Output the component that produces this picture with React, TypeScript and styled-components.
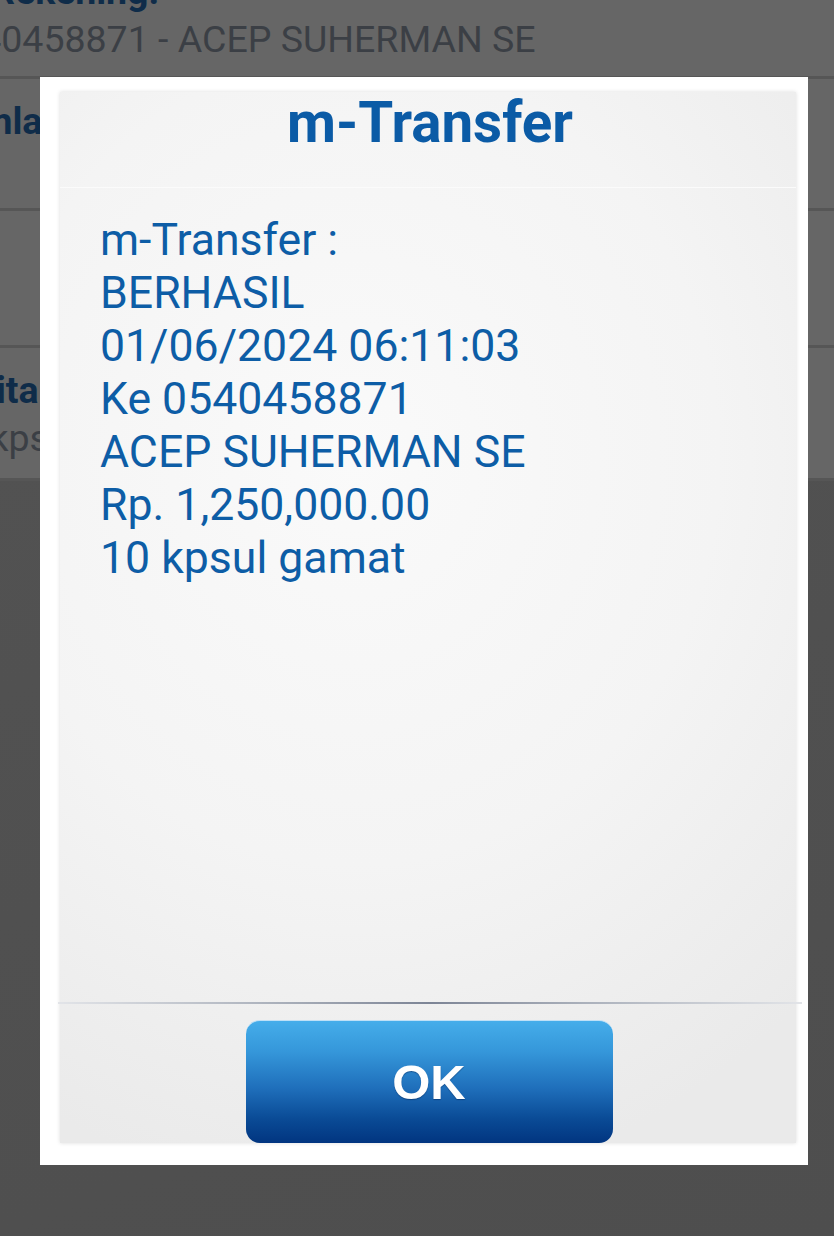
import * as React from 'react'
import styled, { createGlobalStyle } from 'styled-components'

const fields = [
  { label: 'Ke Rekening:', value: '0540458871 - ACEP SUHERMAN SE', height: 130 },
  { label: 'Jumlah:', value: '', height: 132 },
  { label: '', value: '', height: 137 },
  { label: 'Berita:', value: '10 kpsul gamat', height: 133 },
]

const lines = [
  'm-Transfer :',
  'BERHASIL',
  '01/06/2024 06:11:03',
  'Ke 0540458871',
  'ACEP SUHERMAN SE',
  'Rp. 1,250,000.00',
  '10 kpsul gamat',
]

export default function App() {
  return (
    <>
      <GlobalStyle />
      <Screen>
        <Page>
          {fields.map((f, i) => (
            <Field key={i} $height={f.height}>
              {f.label && <Label>{f.label}</Label>}
              {f.value && <Value>{f.value}</Value>}
            </Field>
          ))}
        </Page>

        <Modal>
          <Panel>
            <Header>
              <Title>m-Transfer</Title>
            </Header>
            <Body>
              {lines.map((l) => (
                <Line key={l}>{l}</Line>
              ))}
            </Body>
            <Divider />
            <Footer>
              <OkButton type="button">OK</OkButton>
            </Footer>
          </Panel>
        </Modal>
      </Screen>
    </>
  )
}

// Styles
const GlobalStyle = createGlobalStyle`
  html, body {
    margin: 0;
    padding: 0;
    background: #515151;
  }

  body {
    font-family: Roboto, 'Noto Sans', sans-serif;
  }
`

const Screen = styled.div`
  position: relative;
  width: 834px;
  height: 1236px;
  overflow: hidden;
  background: linear-gradient(160deg, #545454 0%, #505050 60%, #4e4e4e 100%);
`

const Page = styled.div`
  display: flex;
  flex-direction: column;
  margin-top: -51px;
`

const Field = styled.div<{ $height: number }>`
  display: flex;
  flex-direction: column;
  box-sizing: border-box;
  height: ${(p) => p.$height}px;
  padding: 20px 0 0 0;
  margin-left: -62px;
  background: #666666;
  border-bottom: 3px solid #565656;
`

const Label = styled.div`
  font-size: 37.5px;
  line-height: 44px;
  font-weight: 700;
  color: #0f2c49;
  white-space: nowrap;
`

const Value = styled.div`
  font-size: 37.5px;
  line-height: 52px;
  color: #3b3f45;
  white-space: nowrap;
`

const Modal = styled.div`
  position: absolute;
  left: 40px;
  top: 77px;
  width: 768px;
  height: 1088px;
  box-sizing: border-box;
  padding: 15px 12px 22px 20px;
  background: #ffffff;
  display: flex;
`

const Panel = styled.div`
  flex: 1;
  display: flex;
  flex-direction: column;
  background: radial-gradient(
    ellipse 90% 70% at 40% 35%,
    #fafafa 0%,
    #f4f4f4 55%,
    #eaeaea 100%
  );
  box-shadow: 0 0 4px rgba(0, 0, 0, 0.14);
`

const Header = styled.div`
  height: 95px;
  display: flex;
  justify-content: center;
  border-bottom: 1px solid #fbfbfb;
`

const Title = styled.h1`
  margin: 0;
  padding-left: 4px;
  font-size: 56.5px;
  line-height: 62px;
  font-weight: 700;
  color: #0b5ba6;
`

const Body = styled.div`
  flex: 1;
  display: flex;
  flex-direction: column;
  padding: 26px 0 0 40px;
`

const Line = styled.div`
  font-size: 44.6px;
  line-height: 53px;
  color: #0d5da6;
  white-space: nowrap;
`

const Divider = styled.div`
  height: 2px;
  margin: 0 -6px 0 -2px;
  background: linear-gradient(
    90deg,
    #e2e4e8 0%,
    #a9afba 30%,
    #7c8495 50%,
    #a9afba 70%,
    #e2e4e8 100%
  );
`

const Footer = styled.div`
  display: flex;
  justify-content: center;
  padding-top: 16px;
`

const OkButton = styled.button`
  width: 367px;
  height: 123px;
  margin-left: 2px;
  border: none;
  border-top: 1px solid #bfe0f7;
  border-radius: 14px;
  background: linear-gradient(
    180deg,
    #45adea 0%,
    #3597da 25%,
    #1f6fbb 55%,
    #0a4b96 80%,
    #013580 100%
  );
  color: #ffffff;
  font-family: 'Liberation Sans', Arial, sans-serif;
  font-size: 49px;
  font-weight: 700;
  text-shadow: 0 1px 1px rgba(0, 30, 80, 0.45);
  cursor: pointer;
`
